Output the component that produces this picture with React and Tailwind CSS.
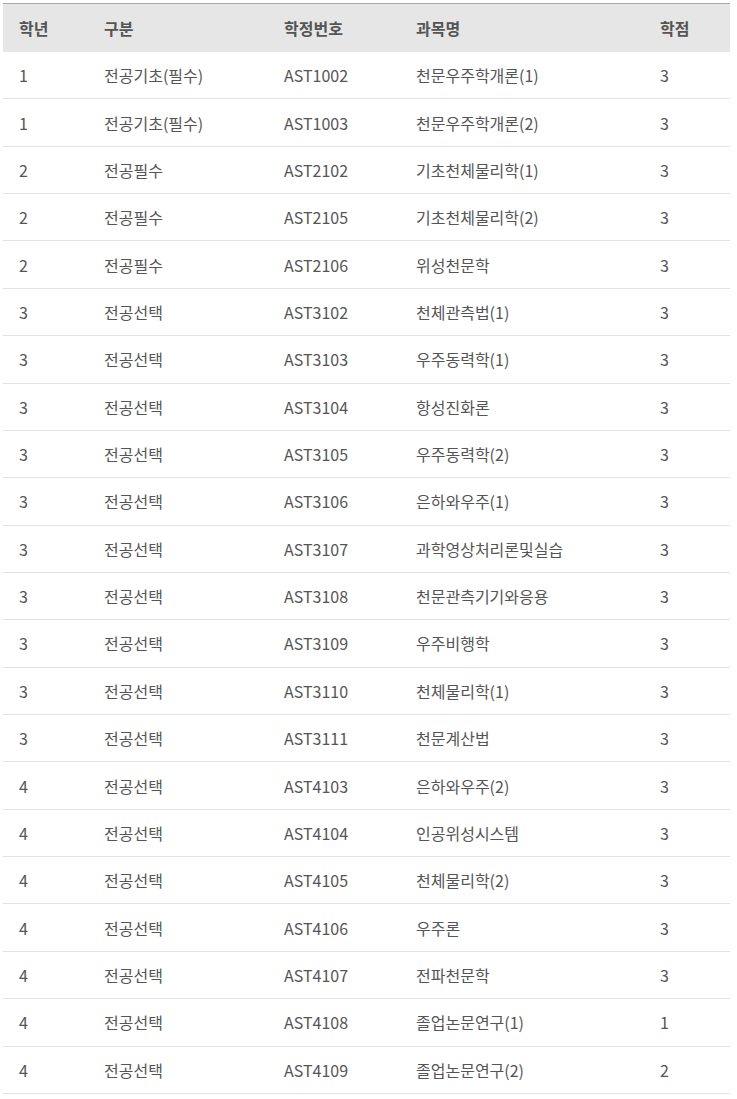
const rows = [
  ["1", "전공기초(필수)", "AST1002", "천문우주학개론(1)", "3"],
  ["1", "전공기초(필수)", "AST1003", "천문우주학개론(2)", "3"],
  ["2", "전공필수", "AST2102", "기초천체물리학(1)", "3"],
  ["2", "전공필수", "AST2105", "기초천체물리학(2)", "3"],
  ["2", "전공필수", "AST2106", "위성천문학", "3"],
  ["3", "전공선택", "AST3102", "천체관측법(1)", "3"],
  ["3", "전공선택", "AST3103", "우주동력학(1)", "3"],
  ["3", "전공선택", "AST3104", "항성진화론", "3"],
  ["3", "전공선택", "AST3105", "우주동력학(2)", "3"],
  ["3", "전공선택", "AST3106", "은하와우주(1)", "3"],
  ["3", "전공선택", "AST3107", "과학영상처리론및실습", "3"],
  ["3", "전공선택", "AST3108", "천문관측기기와응용", "3"],
  ["3", "전공선택", "AST3109", "우주비행학", "3"],
  ["3", "전공선택", "AST3110", "천체물리학(1)", "3"],
  ["3", "전공선택", "AST3111", "천문계산법", "3"],
  ["4", "전공선택", "AST4103", "은하와우주(2)", "3"],
  ["4", "전공선택", "AST4104", "인공위성시스템", "3"],
  ["4", "전공선택", "AST4105", "천체물리학(2)", "3"],
  ["4", "전공선택", "AST4106", "우주론", "3"],
  ["4", "전공선택", "AST4107", "전파천문학", "3"],
  ["4", "전공선택", "AST4108", "졸업논문연구(1)", "1"],
  ["4", "전공선택", "AST4109", "졸업논문연구(2)", "2"],
];

const headers = ["학년", "구분", "학정번호", "과목명", "학점"];
// column widths measured from the screenshot
const cols = ["w-[85px]", "w-[180px]", "w-[132px]", "w-[244px]", "w-[86px]"];

export default function App() {
  return (
    <div
      className="bg-white pl-[3px] pt-[3px] text-[16px] text-[#555]"
      style={{ fontFamily: '"Noto Sans CJK KR", "Noto Sans", sans-serif' }}
    >
      <div className="w-[727px] border-t border-[#a8a8a8]">
        {/* Header */}
        <div className="flex h-[48px] items-center bg-[#e6e6e6] font-bold">
          {headers.map((h, i) => (
            <div key={h} className={`${cols[i]} pl-4`}>
              {h}
            </div>
          ))}
        </div>

        {/* Body */}
        {rows.map((r, ri) => (
          <div
            key={ri}
            className="flex h-[47.36px] items-center border-b border-[#e3e3e3]"
          >
            {r.map((c, i) => (
              <div key={i} className={`${cols[i]} pl-4`}>
                {c}
              </div>
            ))}
          </div>
        ))}
      </div>
    </div>
  );
}
